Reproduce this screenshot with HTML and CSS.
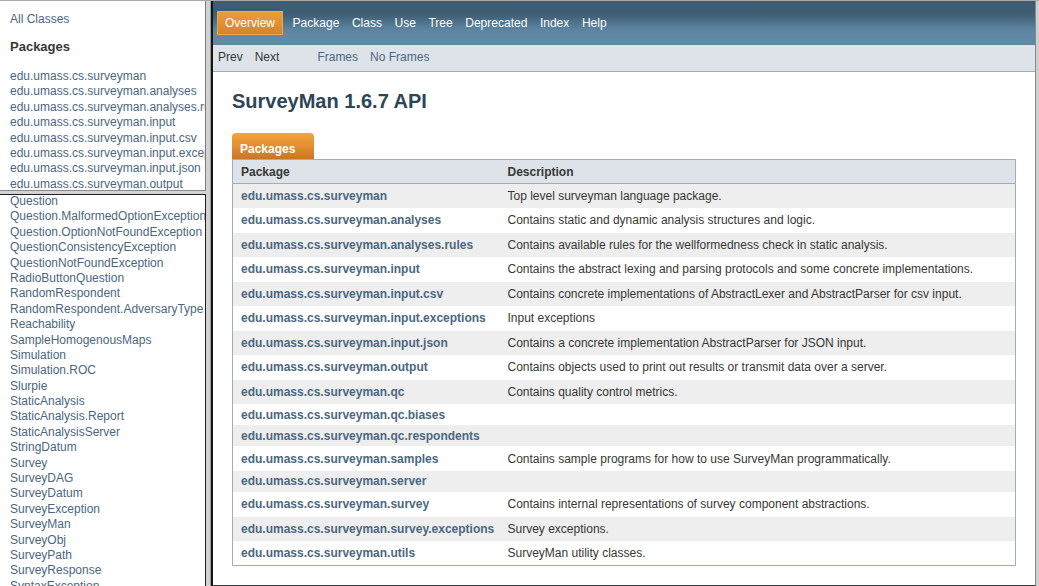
FILE: index.html
```html
<!DOCTYPE html>
<html>
<head>
<meta charset="utf-8">
<title>SurveyMan 1.6.7 API</title>
<link rel="stylesheet" href="styles.css">
</head>
<body>
<div class="window">
  <div class="left">
    <div class="pane top-pane">
      <div class="all-classes"><a>All Classes</a></div>
      <h2 class="pkg-title">Packages</h2>
      <ul class="list">
        <li>edu.umass.cs.surveyman</li>
        <li>edu.umass.cs.surveyman.analyses</li>
        <li>edu.umass.cs.surveyman.analyses.rules</li>
        <li>edu.umass.cs.surveyman.input</li>
        <li>edu.umass.cs.surveyman.input.csv</li>
        <li>edu.umass.cs.surveyman.input.exceptions</li>
        <li>edu.umass.cs.surveyman.input.json</li>
        <li>edu.umass.cs.surveyman.output</li>
        <li>edu.umass.cs.surveyman.qc</li>
      </ul>
    </div>
    <div class="hsplit"></div>
    <div class="pane bottom-pane">
      <ul class="list classes">
        <li>Question</li>
        <li>Question.MalformedOptionException</li>
        <li>Question.OptionNotFoundException</li>
        <li>QuestionConsistencyException</li>
        <li>QuestionNotFoundException</li>
        <li>RadioButtonQuestion</li>
        <li>RandomRespondent</li>
        <li>RandomRespondent.AdversaryType</li>
        <li>Reachability</li>
        <li>SampleHomogenousMaps</li>
        <li>Simulation</li>
        <li>Simulation.ROC</li>
        <li>Slurpie</li>
        <li>StaticAnalysis</li>
        <li>StaticAnalysis.Report</li>
        <li>StaticAnalysisServer</li>
        <li>StringDatum</li>
        <li>Survey</li>
        <li>SurveyDAG</li>
        <li>SurveyDatum</li>
        <li>SurveyException</li>
        <li>SurveyMan</li>
        <li>SurveyObj</li>
        <li>SurveyPath</li>
        <li>SurveyResponse</li>
        <li>SyntaxException</li>
        <li>TabularPrinter</li>
      </ul>
    </div>
  </div>
  <div class="vsplit"></div>
  <div class="right">
    <div class="topbar">
      <ul class="nav">
        <li class="nav-current">Overview</li>
        <li>Package</li>
        <li>Class</li>
        <li>Use</li>
        <li>Tree</li>
        <li>Deprecated</li>
        <li>Index</li>
        <li>Help</li>
      </ul>
    </div>
    <div class="subnav">
      <span class="sub-plain">Prev</span>
      <span class="sub-plain">Next</span>
      <span class="sub-link sub-frames">Frames</span>
      <span class="sub-link">No Frames</span>
    </div>
    <div class="content">
      <h1 class="title">SurveyMan 1.6.7 API</h1>
      <div class="tab">Packages</div>
      <table class="summary">
        <thead>
          <tr><th class="col-first">Package</th><th class="col-last">Description</th></tr>
        </thead>
        <tbody>
          <tr class="alt"><td class="col-first">edu.umass.cs.surveyman</td><td class="col-last">Top level surveyman language package.</td></tr>
          <tr><td class="col-first">edu.umass.cs.surveyman.analyses</td><td class="col-last">Contains static and dynamic analysis structures and logic.</td></tr>
          <tr class="alt"><td class="col-first">edu.umass.cs.surveyman.analyses.rules</td><td class="col-last">Contains available rules for the wellformedness check in static analysis.</td></tr>
          <tr><td class="col-first">edu.umass.cs.surveyman.input</td><td class="col-last">Contains the abstract lexing and parsing protocols and some concrete implementations.</td></tr>
          <tr class="alt"><td class="col-first">edu.umass.cs.surveyman.input.csv</td><td class="col-last">Contains concrete implementations of AbstractLexer and AbstractParser for csv input.</td></tr>
          <tr><td class="col-first">edu.umass.cs.surveyman.input.exceptions</td><td class="col-last">Input exceptions</td></tr>
          <tr class="alt"><td class="col-first">edu.umass.cs.surveyman.input.json</td><td class="col-last">Contains a concrete implementation AbstractParser for JSON input.</td></tr>
          <tr><td class="col-first">edu.umass.cs.surveyman.output</td><td class="col-last">Contains objects used to print out results or transmit data over a server.</td></tr>
          <tr class="alt"><td class="col-first">edu.umass.cs.surveyman.qc</td><td class="col-last">Contains quality control metrics.</td></tr>
          <tr class="empty"><td class="col-first">edu.umass.cs.surveyman.qc.biases</td><td class="col-last"></td></tr>
          <tr class="alt empty"><td class="col-first">edu.umass.cs.surveyman.qc.respondents</td><td class="col-last"></td></tr>
          <tr><td class="col-first">edu.umass.cs.surveyman.samples</td><td class="col-last">Contains sample programs for how to use SurveyMan programmatically.</td></tr>
          <tr class="alt empty"><td class="col-first">edu.umass.cs.surveyman.server</td><td class="col-last"></td></tr>
          <tr><td class="col-first">edu.umass.cs.surveyman.survey</td><td class="col-last">Contains internal representations of survey component abstractions.</td></tr>
          <tr class="alt"><td class="col-first">edu.umass.cs.surveyman.survey.exceptions</td><td class="col-last">Survey exceptions.</td></tr>
          <tr><td class="col-first">edu.umass.cs.surveyman.utils</td><td class="col-last">SurveyMan utility classes.</td></tr>
        </tbody>
      </table>
    </div>
  </div>
</div>
</body>
</html>
```
FILE: styles.css
```css
* { box-sizing: border-box; }
html, body {
  margin: 0;
  padding: 0;
  width: 1039px;
  height: 586px;
  overflow: hidden;
  background: #ffffff;
  font-family: "Liberation Sans", Arial, Helvetica, sans-serif;
  font-size: 12px;
}
ul { list-style: none; margin: 0; padding: 0; }

.window {
  display: flex;
  width: 1039px;
  height: 586px;
  border-top: 1px solid #a9a9a9;
  background: #cfcfcf;
}

/* left frames */
.left {
  width: 206px;
  flex: none;
  display: flex;
  flex-direction: column;
  background: #ffffff;
}
.pane {
  overflow: hidden;
  white-space: nowrap;
}
.top-pane {
  height: 189px;
  flex: none;
  border-right: 1px solid #7d7d7d;
  padding-left: 10px;
}
.all-classes {
  margin-top: 11px;
  height: 15px;
  line-height: 15px;
  color: #4a6782;
}
.pkg-title {
  margin: 12px 0 0;
  font-size: 13px;
  line-height: 16px;
  font-weight: bold;
  color: #353833;
}
.list {
  margin-top: 14px;
  color: #4a6782;
}
.list li {
  line-height: 15.4px;
  height: 15.4px;
}
.hsplit {
  height: 5px;
  flex: none;
  background: #d3d3d3;
  border-top: 1px solid #8e8e8e;
  border-bottom: 1px solid #1e1e1e;
}
.bottom-pane {
  flex: 1;
  border-right: 1px solid #1e1e1e;
  padding-left: 10px;
}
.classes {
  margin-top: -1px;
}

.vsplit {
  width: 5px;
  flex: none;
  background: #d2d2d2;
  border-right: 1px solid #9a9a9a;
}

/* right frame */
.right {
  width: 825px;
  flex: none;
  background: #ffffff;
  border-left: 2px solid #151515;
  border-right: 1px solid #8a8a8a;
  border-bottom: 1px solid #333b40;
  display: flex;
  flex-direction: column;
}
.topbar {
  height: 44px;
  flex: none;
  background: linear-gradient(to bottom, #3c5a70 0%, #3f5d74 30%, #5a819d 62%, #6189a5 75%, #6089a4 100%);
  padding: 10px 0 0 4px;
}
.nav {
  display: flex;
  align-items: center;
  gap: 12.6px;
  color: #ffffff;
  font-size: 12px;
}
.nav li {
  line-height: 23px;
}
.nav-current {
  height: 24px;
  padding: 0 7px;
  margin-right: -3px;
  border: 1px solid #e9ad4f;
  background: linear-gradient(to bottom, #eb9d3a, #d7832a);
  line-height: 22px;
}
.subnav {
  height: 27px;
  flex: none;
  background: #dee3e9;
  border-bottom: 1px solid #9eadc0;
  display: flex;
  align-items: center;
  padding: 0 0 2px 5px;
  gap: 12px;
}
.sub-plain { color: #353833; }
.sub-link { color: #4a6782; }
.sub-frames { margin-left: 26px; }

.content {
  padding: 0 19px 0 19px;
}
.title {
  margin: 17px 0 0;
  font-size: 20px;
  line-height: 24px;
  font-weight: bold;
  color: #2c4557;
}
.tab {
  margin-top: 20px;
  width: 82px;
  height: 26px;
  padding: 9px 0 0 8px;
  line-height: 14px;
  font-weight: bold;
  color: #ffffff;
  border-radius: 4px 4px 0 0;
  background: linear-gradient(to bottom, #f2a53e 0%, #e38e2f 50%, #cb7524 100%);
}
.summary {
  width: 784px;
  border-collapse: collapse;
  border: 1px solid #9eadc0;
  table-layout: fixed;
}
.summary th {
  height: 24px;
  background: #dee3e9;
  border-bottom: 1px solid #9eadc0;
  text-align: left;
  font-weight: bold;
  color: #353833;
  padding: 0 8px;
  vertical-align: middle;
}
.summary td {
  height: 24.5px;
  padding: 0 8px;
  vertical-align: middle;
  white-space: nowrap;
  overflow: hidden;
}
.summary tr.empty td { height: 21.2px; }
.summary tr.alt td { background: #eeeeef; }
.summary .col-first { width: 267px; }
.summary td.col-first {
  font-weight: bold;
  color: #4a6782;
}
.summary td.col-last {
  color: #353833;
}
```
